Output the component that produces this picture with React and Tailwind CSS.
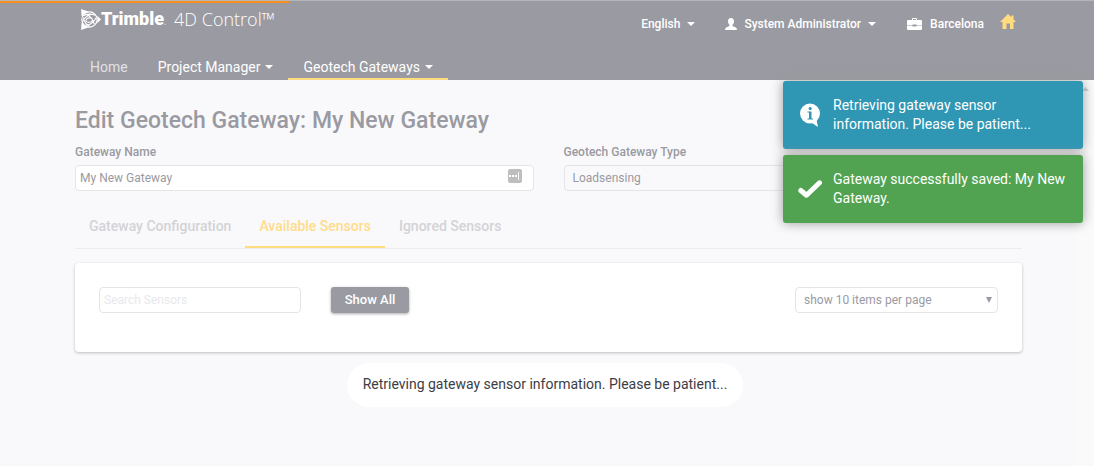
import React from 'react';

const Caret = () => (
  <span className="inline-block border-x-4 border-t-4 border-x-transparent border-t-current" />
);

const TrimbleMark = () => (
  <svg className="h-[21px] w-[21px] shrink-0" viewBox="0 0 20 20" fill="none" stroke="#fff" aria-hidden="true">
    <path d="M1 0L8.500 2.600L1.500 7ZM1 20L8.500 17.400L1.500 13ZM20 10L16.500 6.500V13.500Z" fill="#fff" stroke="none" />
    <circle cx="9" cy="10" r="7.300" fill="#9a9aa2" stroke="#fff" strokeWidth="1.100" />
    <path d="M3 6.500Q8 3.500 14.500 6M2.500 12Q5 6.500 11 5M5 15.500Q12 15 15.500 8M3.500 8Q3.500 13.500 9.500 16.800M7 5.500Q12 8 13.500 14.500M5.500 11.500Q6 8.500 9 8.300Q12.500 8.500 11.500 11.500Q8.500 14 5.500 11.500" strokeWidth="1" />
  </svg>
);

const UserIcon = () => (
  <svg className="h-3 w-3" viewBox="0 0 12 12" fill="currentColor" aria-hidden="true">
    <path d="M6 0C4 0 3 1.300 3 3.200C3 4.800 3.600 6 4.500 6.800V8L1.200 9.600Q0 10.200 0 12H12Q12 10.200 10.800 9.600L7.500 8V6.800C8.400 6 9 4.800 9 3.200C9 1.300 8 0 6 0Z" />
  </svg>
);

const BriefcaseIcon = () => (
  <svg className="h-3 w-[15px]" viewBox="0 0 15 12" fill="currentColor" aria-hidden="true">
    <path d="M5 2V1Q5 0 6 0H9Q10 0 10 1V2H14Q15 2 15 3V7H9.500V6.500H5.500V7H0V3Q0 2 1 2ZM6 2H9V1H6ZM0 7.600H5.500V8.500H9.500V7.600H15V11Q15 12 14 12H1Q0 12 0 11Z" fillRule="evenodd" />
  </svg>
);

const HomeIcon = () => (
  <svg className="h-[15px] w-4" viewBox="0 0 16 15" fill="currentColor" aria-hidden="true">
    <path d="M8 0L11.500 3.300V1.500H13.500V5.200L16 8H13.500V15H10V9.500H6.500V15H2.500V8H0Z" />
  </svg>
);

const InfoIcon = () => (
  <svg className="h-6 w-5" viewBox="0 0 20 24" aria-hidden="true">
    <circle cx="10" cy="10.500" r="10" fill="#fff" />
    <path d="M12 20L18 24L16.500 17Z" fill="#fff" />
    <circle cx="10.200" cy="5.500" r="1.600" fill="#2f96b4" />
    <path d="M7.500 8.500H11.500V15.500H13V16.500H7.500V15.500H9V9.500H7.500Z" fill="#2f96b4" />
  </svg>
);

const CheckIcon = () => (
  <svg className="h-[18px] w-6" viewBox="0 0 24 18" fill="none" stroke="#fff" strokeWidth="5" strokeLinecap="round" strokeLinejoin="round" aria-hidden="true">
    <path d="M2.800 10.500L8.500 15.200L21.500 2.800" />
  </svg>
);

const navItems = [
  { label: 'Home', className: 'border-transparent text-[#e1e1e4]' },
  { label: 'Project Manager', caret: true, className: 'border-transparent text-white' },
  { label: 'Geotech Gateways', caret: true, className: 'border-[#ffdc7d] text-white' },
];

const tabs = [
  { label: 'Gateway Configuration', className: 'border-transparent text-[#d3d3d6]' },
  { label: 'Available Sensors', active: true, className: 'border-[#ffdc7d] text-[#ffdc8a]' },
  { label: 'Ignored Sensors', className: 'border-transparent text-[#d3d3d6]' },
];

const Header = () => (
  <header className="relative flex h-20 flex-col justify-between border-t border-[#b4b4ba] bg-[#9a9aa2] pr-[72px] pl-[75px] text-white">
    <div className="absolute top-0 left-0 h-0.5 w-[289px] bg-[#f7901e]" />
    <div className="flex justify-between">
      <a href="#" className="mt-2 ml-[5px] flex h-5 items-center">
        <TrimbleMark />
        <span className="font-['Roboto',sans-serif] text-lg font-black">Trimble</span>
        <span className="self-end text-[8px]">.</span>
        <span className="ml-2 font-['Open_Sans',sans-serif] text-lg font-light">4D Control™</span>
      </a>
      <div className="mt-[13px] flex h-5 items-center text-xs font-medium">
        <button type="button" className="flex items-center gap-[7px]">
          English
          <Caret />
        </button>
        <button type="button" className="ml-[30px] flex items-center gap-[7px]">
          <UserIcon />
          <span>System Administrator</span>
          <Caret />
        </button>
        <a href="#" className="ml-[31px] flex items-center gap-2">
          <BriefcaseIcon />
          Barcelona
        </a>
        <a href="#" aria-label="Home" className="mr-1.5 ml-4 self-start text-[#ffdc7d]">
          <HomeIcon />
        </a>
      </div>
    </div>
    <nav className="flex">
      {navItems.map((item) => (
        <a key={item.label} href="#" className={`flex h-6 items-center gap-[5px] border-b-2 px-[15px] text-sm ${item.className}`}>
          {item.label}
          {item.caret && <Caret />}
        </a>
      ))}
    </nav>
  </header>
);

const Toast = ({ icon, className, children }) => (
  <div role="status" className={`flex h-[68px] items-center rounded-[3px] text-sm leading-[19px] text-white shadow-[0_0_12px_#999] ${className}`}>
    <div className="flex w-[50px] shrink-0 justify-center pl-1">{icon}</div>
    <p className="pr-3">{children}</p>
  </div>
);

const App = () => (
  <div className="relative min-h-screen bg-[#f9f9fb] font-['Roboto',sans-serif] text-[#9a9aa2]">
    <Header />
    <main className="pt-[25px] pr-[72px] pl-[75px]">
      <h1 className="text-[23px] leading-8 font-medium">Edit Geotech Gateway: My New Gateway</h1>
      <div className="mt-[7px] grid grid-cols-2 gap-[30px]">
        <div>
          <label htmlFor="gateway-name" className="block text-xs leading-4 font-medium">Gateway Name</label>
          <div className="relative mt-[5px]">
            <input id="gateway-name" type="text" defaultValue="My New Gateway" className="block h-[26px] w-full rounded border border-[#e5e5e8] bg-white px-1 text-xs" />
            <span className="absolute top-1 right-3 flex h-3.5 w-3.5 items-center gap-px rounded-xs bg-[#bebebe] px-px">
              <i className="h-0.5 w-0.5 bg-white" />
              <i className="h-0.5 w-0.5 bg-white" />
              <i className="h-0.5 w-0.5 bg-white" />
              <i className="h-2 w-px bg-white" />
            </span>
          </div>
        </div>
        <div>
          <label htmlFor="gateway-type" className="block text-xs leading-4 font-medium">Geotech Gateway Type</label>
          <input id="gateway-type" type="text" readOnly defaultValue="Loadsensing" className="mt-[5px] block h-[26px] w-full rounded border border-[#e5e5e8] px-2 text-xs" />
        </div>
      </div>
      <div role="tablist" className="mt-[13px] flex border-b border-[#ededf0]">
        {tabs.map((tab) => (
          <button key={tab.label} type="button" role="tab" aria-selected={Boolean(tab.active)} className={`h-11 border-b-2 px-3.5 pt-0.5 text-sm font-medium ${tab.className}`}>
            {tab.label}
          </button>
        ))}
      </div>
      <section className="mt-3.5 flex h-[89px] items-start rounded bg-white p-6 shadow-[0_1px_3px_#bbb]">
        <input type="text" aria-label="Search Sensors" placeholder="Search Sensors" className="h-[26px] w-[202px] rounded border border-[#e5e5e8] px-1 text-xs placeholder:text-[#e8e8ec]" />
        <button type="button" className="ml-[30px] h-[26px] w-[78px] rounded-[3px] bg-[#9a9aa2] text-[13px] font-medium text-white shadow-[0_1px_3px_#aaa]">Show All</button>
        <div className="relative ml-auto">
          <select aria-label="Items per page" className="h-[26px] w-[203px] appearance-none rounded border border-[#e5e5e8] bg-white px-2 text-xs">
            <option>show 10 items per page</option>
          </select>
          <svg className="pointer-events-none absolute top-2.5 right-1.5 h-1.5 w-1.5" viewBox="0 0 6 6" fill="currentColor" aria-hidden="true">
            <path d="M0 0H6L3 6Z" />
          </svg>
        </div>
      </section>
      <div className="mt-[11px] mr-[7px] flex justify-center">
        <p role="status" className="rounded-full bg-white px-4 pt-[11px] pb-[13px] text-sm text-[#3d3d46]">
          Retrieving gateway sensor information. Please be patient...
        </p>
      </div>
    </main>
    <div className="absolute top-20 right-0 bottom-0 w-[17px] bg-[#fafafa]">
      <svg className="mx-auto mt-[7px] h-1 w-[7px]" viewBox="0 0 7 4" fill="#c8c8c8" aria-hidden="true">
        <path d="M0 4L3.500 0L7 4Z" />
      </svg>
    </div>
    <div className="absolute top-[81px] right-[11px] flex w-[300px] flex-col gap-1.5">
      <Toast icon={<InfoIcon />} className="bg-[#2f96b4]">
        Retrieving gateway sensor information. Please be patient...
      </Toast>
      <Toast icon={<CheckIcon />} className="bg-[#51a351]">
        Gateway successfully saved: My New Gateway.
      </Toast>
    </div>
  </div>
);

export default App;
